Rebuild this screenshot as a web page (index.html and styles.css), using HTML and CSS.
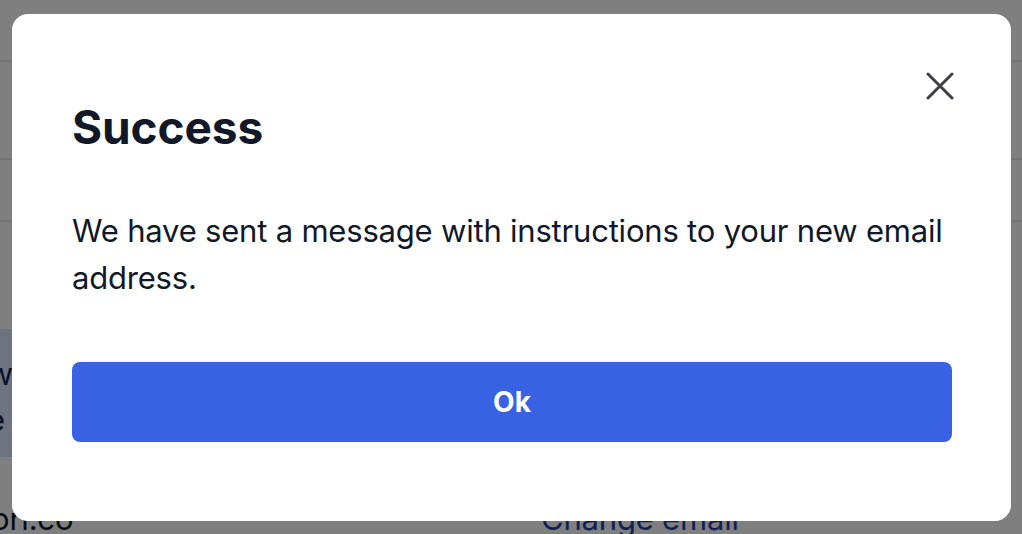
FILE: index.html
```html
<!DOCTYPE html>
<html lang="en">
<head>
<meta charset="utf-8">
<title>Success</title>
<link rel="stylesheet" href="styles.css">
</head>
<body>
<div class="page">
  <div class="bar bar-top"></div>
  <div class="bar bar-mid"></div>
  <div class="bar bar-low"></div>
  <div class="notice">
    <p>Please confirm your new</p>
    <p>address to complete the change</p>
  </div>
  <div class="email-row">
    <span class="email">user@demori.co</span>
    <a class="change" href="#">Change email</a>
  </div>
</div>
<div class="overlay">
  <div class="modal" role="dialog" aria-labelledby="modal-title">
    <button class="close" aria-label="Close">
      <svg viewBox="0 0 28 28" width="28" height="28" aria-hidden="true">
        <path d="M2 2 L26 26 M26 2 L2 26" stroke="currentColor" stroke-width="3" stroke-linecap="round" fill="none"/>
      </svg>
    </button>
    <h2 id="modal-title" class="title">Success</h2>
    <p class="text">We have sent a message with instructions to your new email address.</p>
    <button class="ok">Ok</button>
  </div>
</div>
</body>
</html>
```

FILE: styles.css
```css
* { box-sizing: border-box; }
html, body { margin: 0; padding: 0; }
body {
  font-family: Inter, "Liberation Sans", sans-serif;
  background: #ffffff;
  color: #111827;
  width: 1022px;
  height: 534px;
  overflow: hidden;
}
.page {
  display: flex;
  flex-direction: column;
}
.bar { border-bottom: 2px solid #e5e7eb; }
.bar-top { height: 62px; }
.bar-mid { height: 98px; }
.bar-low { height: 62px; }
.notice {
  margin-top: 107px;
  margin-left: -1187px;
  width: 1200px;
  height: 128px;
  background: #dde6ff;
  padding: 22px 0 0 0;
  font-size: 31px;
  line-height: 46px;
  letter-spacing: -0.2px;
  color: #142552;
  text-align: right;
}
.notice p { margin: 0; }
.notice p + p { padding-right: 8px; }
.email-row {
  display: flex;
  margin-top: 44px;
  font-size: 31px;
  line-height: 36px;
  letter-spacing: -0.2px;
}
.email { margin-left: -166px; width: 707px; }
.change { color: #1e40af; text-decoration: none; }
.overlay {
  position: fixed;
  inset: 0;
  background: rgba(0, 0, 0, 0.5);
  padding: 14px 11px 13px 12px;
  display: flex;
}
.modal {
  position: relative;
  flex: 1;
  background: #ffffff;
  border-radius: 16px;
  padding: 87px 59px 79px 60px;
  display: flex;
  flex-direction: column;
}
.close {
  position: absolute;
  top: 58px;
  right: 57px;
  width: 28px;
  height: 28px;
  padding: 0;
  border: 0;
  background: none;
  color: #3f3f46;
  display: flex;
}
.title {
  margin: 0;
  font-size: 46px;
  line-height: 52px;
  font-weight: 700;
  letter-spacing: -0.1px;
  color: #111827;
}
.text {
  margin: 54px 0 0 0;
  font-size: 31px;
  line-height: 47px;
  letter-spacing: -0.2px;
  color: #111827;
}
.ok {
  margin-top: 61px;
  height: 80px;
  border: 0;
  border-radius: 8px;
  background: #3862e3;
  color: #ffffff;
  font-family: inherit;
  font-size: 28px;
  font-weight: 700;
}
```
